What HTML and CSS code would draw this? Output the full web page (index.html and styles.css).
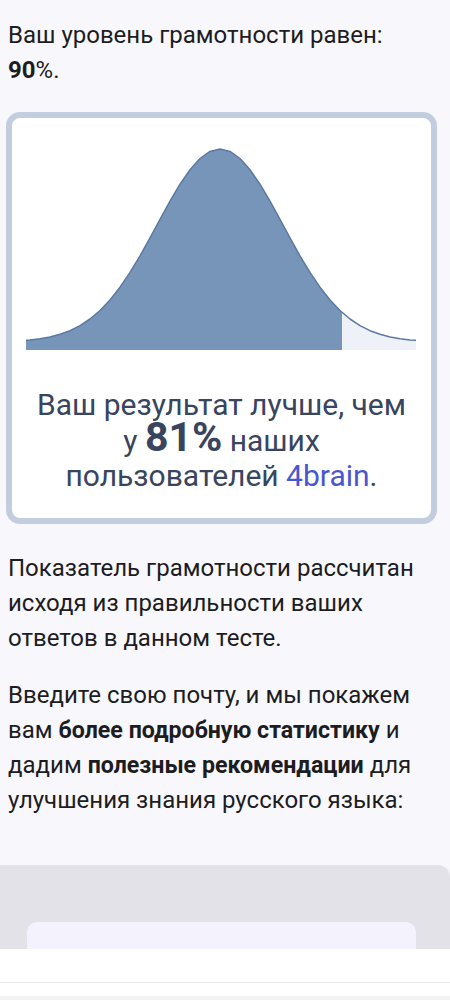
FILE: index.html
```html
<!DOCTYPE html>
<html lang="ru">
<head>
  <meta charset="UTF-8" />
  <title>Уровень грамотности</title>
  <link rel="stylesheet" href="styles.css">
</head>
<body>

  <div class="page">
    <p class="level">Ваш уровень грамотности равен: <strong>90</strong>%.</p>

    <div class="result-card">
      <svg class="curve" width="390" height="212" viewBox="26 140 390 212">
        <path class="curve-done" d="M26,350 L26,340.3 L30,340 L40,338.7 L50,336.9 L60,334.3 L70,330.7 L80,325.6 L90,319 L100,310.5 L110,300 L120,287.2 L130,272.4 L140,255.8 L150,237.9 L160,219.4 L170,201.1 L180,184.2 L190,169.7 L200,158.5 L210,151.4 L220,149 L230,151.4 L240,158.5 L250,169.7 L260,184.2 L270,201.1 L280,219.4 L290,237.9 L300,255.8 L310,272.4 L320,287.2 L330,300 L340,310.5 L342,312.4 L342,350 Z"/>
        <path class="curve-rest" d="M342,350 L342,312.4 L350,319 L360,325.6 L370,330.7 L380,334.3 L390,336.9 L400,338.7 L410,340 L416,340.3 L416,350 Z"/>
        <polyline class="curve-line" points="26,340.3 30,340 40,338.7 50,336.9 60,334.3 70,330.7 80,325.6 90,319 100,310.5 110,300 120,287.2 130,272.4 140,255.8 150,237.9 160,219.4 170,201.1 180,184.2 190,169.7 200,158.5 210,151.4 220,149 230,151.4 240,158.5 250,169.7 260,184.2 270,201.1 280,219.4 290,237.9 300,255.8 310,272.4 320,287.2 330,300 340,310.5 350,319 360,325.6 370,330.7 380,334.3 390,336.9 400,338.7 410,340 416,340.3"/>
      </svg>
      <p class="result-text">Ваш результат лучше, чем<br>у <b class="big">81%</b> наших<br>пользователей <span class="brand">4brain</span>.</p>
    </div>

    <p class="info">Показатель грамотности рассчитан исходя из правильности ваших ответов в данном тесте.</p>

    <p class="info">Введите свою почту, и мы покажем вам <b>более подробную статистику</b> и дадим <b>полезные рекомендации</b> для улучшения знания русского языка:</p>
  </div>

  <div class="sheet">
    <div class="sheet-box"></div>
  </div>
  <div class="bottom-bar"></div>
  <div class="bottom-strip"></div>

</body>
</html>
```

FILE: styles.css
```css
body {
  margin: 0;
  background: #f8f7fc;
  font-family: Roboto, "Noto Sans", sans-serif;
  color: #1d1d1f;
}
.page {
  padding: 18px 13px 0 6px;
}
.level {
  margin: 0 0 0 2px;
  font-size: 24px;
  line-height: 35px;
}
.level strong {
  font-weight: 700;
}
.result-card {
  margin-top: 24px;
  border: 6px solid #c2cedf;
  border-radius: 14px;
  background: #fff;
  padding: 22px 0 25px;
  text-align: center;
}
.curve {
  display: block;
  margin: 0 auto 0 14px;
}
.curve-done {
  fill: #7795b9;
}
.curve-rest {
  fill: #eef2f8;
}
.curve-line {
  fill: none;
  stroke: #5b79a2;
  stroke-width: 1.5;
  stroke-linejoin: round;
}
.result-text {
  margin: 35px 0 0;
  font-size: 30px;
  line-height: 35px;
  color: #39445e;
}
.big {
  font-size: 41px;
  font-weight: 700;
  line-height: 30px;
}
.brand {
  color: #4a56d1;
}
.info {
  margin: 0 0 0 2px;
  font-size: 24px;
  line-height: 35px;
}
.info b {
  font-size: 23.2px;
}
.result-card + .info {
  margin-top: 27px;
}
.info + .info {
  margin-top: 22px;
}
.sheet {
  margin-top: 47px;
  height: 84px;
  background: #e3e2e8;
  border-radius: 0 12px 0 0;
  overflow: hidden;
  padding: 57px 34px 0 27px;
  box-sizing: border-box;
}
.sheet-box {
  height: 40px;
  background: #f4f3fd;
  border-radius: 10px;
}
.bottom-bar {
  height: 33px;
  background: #fff;
  border-bottom: 1px solid #ececef;
}
.bottom-strip {
  height: 13px;
  background: #fff;
  border-bottom: 20px solid #f3f3f4;
}
```
